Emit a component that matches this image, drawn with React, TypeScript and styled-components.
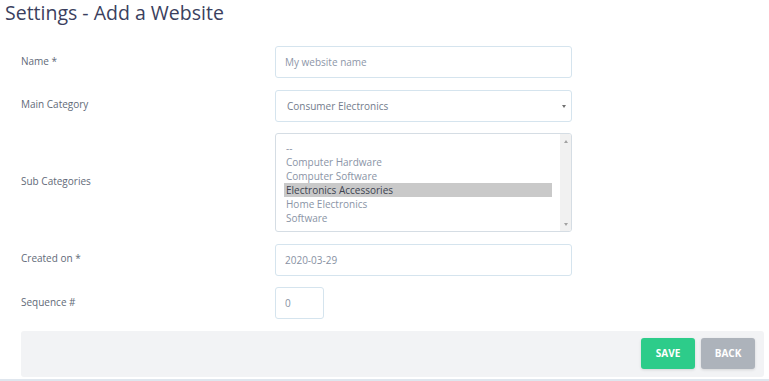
import styled, { createGlobalStyle } from "styled-components"

const Global = createGlobalStyle`
    body {
        margin: 0;
        background: #ffffff;
        font-family: "Open Sans", "Noto Sans", sans-serif;
    }
`

const Page = styled.div`
    width: 769px;
    height: 381px;
    box-sizing: border-box;
    border-bottom: 2px solid #dfe6ee;
    overflow: hidden;
`

const Title = styled.h1`
    margin: 0;
    padding: 0 0 0 5px;
    font-size: 19.5px;
    font-weight: 400;
    line-height: 25px;
    color: #3b3f5e;
`

const Form = styled.form`
    display: grid;
    grid-template-columns: 254px 297px;
    row-gap: 11.5px;
    align-items: center;
    margin: 21px 0 0 21px;
`

const Label = styled.label`
    font-size: 10px;
    color: #626a78;
    padding-bottom: 3px;
`

const Field = styled.input<{ $w?: number }>`
    box-sizing: border-box;
    width: ${p => (p.$w ? `${p.$w}px` : "100%")};
    height: 32px;
    padding: 0 9px;
    border: 1px solid #d5e4ee;
    border-radius: 3px;
    background: #fff;
    font-family: inherit;
    font-size: 10px;
    color: #8891a3;
    outline: none;

    &::placeholder {
        color: #8d96a8;
    }
`

const SelectWrap = styled.div`
    position: relative;

    &::after {
        content: "";
        position: absolute;
        right: 6px;
        top: 15px;
        border-left: 2.5px solid transparent;
        border-right: 2.5px solid transparent;
        border-top: 3.5px solid #707070;
    }
`

const Select = styled.select`
    appearance: none;
    box-sizing: border-box;
    width: 100%;
    height: 32px;
    padding: 0 11px;
    border: 1px solid #d5e4ee;
    border-radius: 3px;
    background: #fff;
    font-family: inherit;
    font-size: 10px;
    color: #737c8c;
    outline: none;
`

const ListFrame = styled.div`
    box-sizing: border-box;
    height: 99px;
    display: flex;
    border: 1px solid #d5dde4;
    border-radius: 3px;
    background: #fff;
    overflow: hidden;
`

const List = styled.ul`
    flex: 1;
    list-style: none;
    margin: 0;
    padding: 7px 8px 0 8px;
`

const Option = styled.li<{ $selected?: boolean }>`
    height: 14px;
    line-height: 14px;
    padding: 0 2px;
    font-size: 10px;
    color: ${p => (p.$selected ? "#3d4350" : "#8a94a6")};
    background: ${p => (p.$selected ? "#c9c9c9" : "transparent")};
`

const ScrollTrack = styled.div`
    width: 11px;
    background: #f1f1f1;
    display: flex;
    flex-direction: column;
    justify-content: space-between;
    align-items: center;
    padding: 6px 0 5px;
`

const Arrow = styled.span<{ $dir: "up" | "down" }>`
    width: 0;
    height: 0;
    border-left: 2.5px solid transparent;
    border-right: 2.5px solid transparent;
    ${p =>
        p.$dir === "up"
            ? "border-bottom: 3px solid #a3a3a3;"
            : "border-top: 3px solid #a3a3a3;"}
`

const Footer = styled.div`
    grid-column: 1 / -1;
    width: 743px;
    box-sizing: border-box;
    height: 46px;
    background: #f2f3f5;
    border-radius: 3px;
    display: flex;
    justify-content: flex-end;
    align-items: center;
    gap: 6px;
    padding: 0 9px 1px 0;
`

const Button = styled.button<{ $tone: "save" | "back" }>`
    width: 54px;
    height: 31px;
    border: none;
    border-radius: 3px;
    background: ${p => (p.$tone === "save" ? "#2dcc8a" : "#adb3bb")};
    color: #fff;
    font-family: inherit;
    font-size: 10px;
    font-weight: 700;
    text-transform: uppercase;
    box-shadow: 0 1px 3px rgba(0, 0, 0, 0.12);
    cursor: pointer;
`

const subCategories = [
    "--",
    "Computer Hardware",
    "Computer Software",
    "Electronics Accessories",
    "Home Electronics",
    "Software",
]

const selectedSub = "Electronics Accessories"

export default function App() {
    return (
        <Page>
            <Global />
            <Title>Settings - Add a Website</Title>
            <Form onSubmit={e => e.preventDefault()}>
                <Label>Name *</Label>
                <Field placeholder="My website name" />

                <Label>Main Category</Label>
                <SelectWrap>
                    <Select defaultValue="ce">
                        <option value="ce">Consumer Electronics</option>
                    </Select>
                </SelectWrap>

                <Label>Sub Categories</Label>
                <ListFrame>
                    <List role="listbox" aria-multiselectable>
                        {subCategories.map(c => (
                            <Option key={c} role="option" $selected={c === selectedSub}>
                                {c}
                            </Option>
                        ))}
                    </List>
                    <ScrollTrack>
                        <Arrow $dir="up" />
                        <Arrow $dir="down" />
                    </ScrollTrack>
                </ListFrame>

                <Label>Created on *</Label>
                <Field defaultValue="2020-03-29" />

                <Label>Sequence #</Label>
                <Field $w={49} defaultValue="0" />

                <Footer>
                    <Button $tone="save" type="submit">Save</Button>
                    <Button $tone="back" type="button">Back</Button>
                </Footer>
            </Form>
        </Page>
    )
}
